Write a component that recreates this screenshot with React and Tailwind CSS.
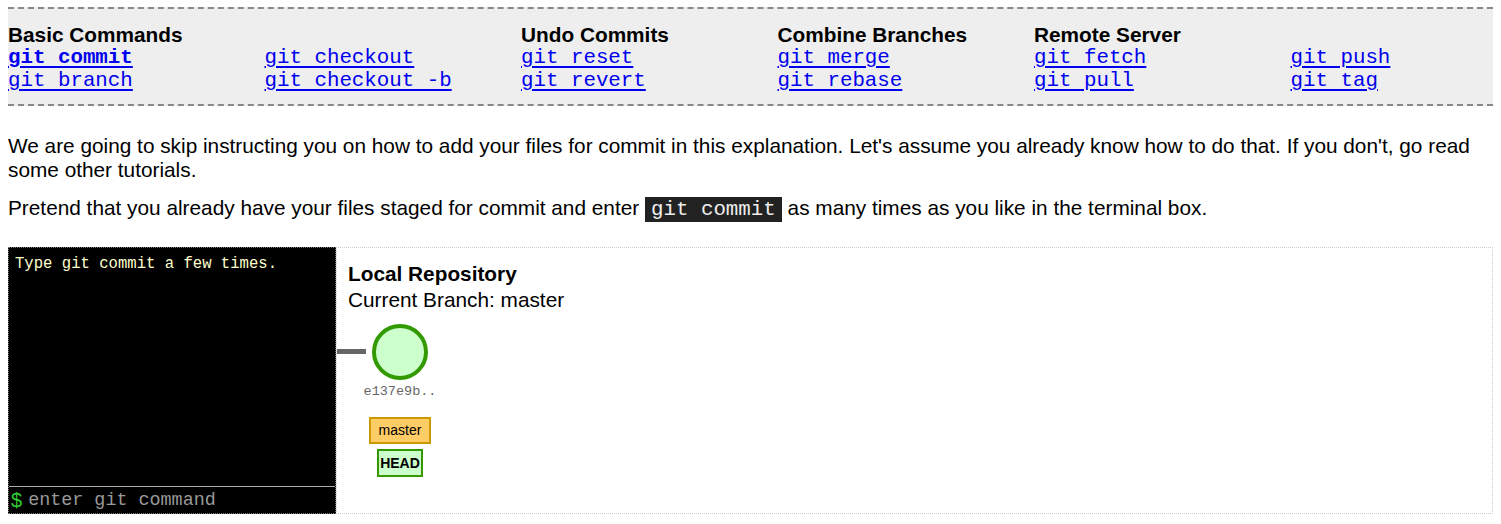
import React from "react";

const columns = [
  { title: "Basic Commands", links: ["git commit", "git branch"], bold: "git commit" },
  { title: "", links: ["git checkout", "git checkout -b"] },
  { title: "Undo Commits", links: ["git reset", "git revert"] },
  { title: "Combine Branches", links: ["git merge", "git rebase"] },
  { title: "Remote Server", links: ["git fetch", "git pull"] },
  { title: "", links: ["git push", "git tag"] },
];

const CommandMenu = () => (
  <div className="flex overflow-hidden border-y-2 border-dashed border-[#888] bg-[#eee] pt-[14px] pb-[12px]">
    {columns.map((col, i) => (
      <div key={i} className="w-[256.5px] shrink-0">
        <div className="h-[23px] text-[20.8px] font-bold leading-[23px]">{col.title}</div>
        {col.links.map((link) => (
          <div key={link} className="leading-[23px]">
            <a
              href="#"
              className={
                "font-['Liberation_Mono','Courier_New',monospace] text-[20.8px] text-[#00e] underline underline-offset-[3px] " +
                (col.bold === link ? "font-bold" : "")
              }
            >
              {link}
            </a>
          </div>
        ))}
      </div>
    ))}
  </div>
);

const Terminal = () => (
  <div className="flex h-full w-[328px] shrink-0 flex-col border border-dotted border-[#777] bg-black">
    <div className="flex-1 px-[6px] pt-[7px] font-['Liberation_Mono','Courier_New',monospace] text-[15.6px] leading-[18px] text-[#ffffcc]">
      Type git commit a few times.
    </div>
    <div className="flex h-[27px] items-center border-t border-[#aaa]">
      <span className="pl-[2px] pr-[6px] text-[20px] leading-none text-[#33cc33]">$</span>
      <input
        type="text"
        placeholder="enter git command"
        className="w-full bg-transparent font-['Liberation_Mono','Courier_New',monospace] text-[18.4px] leading-none text-[#ccc] outline-none placeholder:text-[#999]"
      />
    </div>
  </div>
);

const Repository = () => (
  <div className="relative h-full flex-1 border border-dotted border-[#ccc] pl-[11px] pt-[13px]">
    <div className="text-[20.8px] font-bold leading-[26px]">Local Repository</div>
    <div className="text-[20.8px] leading-[26px]">Current Branch: master</div>

    <svg className="absolute left-0 top-0" width="100" height="140">
      <rect x="-1" y="101" width="30" height="5" fill="#666" />
      <circle cx="63" cy="104" r="26" fill="#ccffcc" stroke="#339900" strokeWidth="4" />
    </svg>
    <div className="absolute left-[23px] top-[135px] w-[80px] text-center font-['Liberation_Mono','Courier_New',monospace] text-[13.5px] leading-[18px] text-[#666]">
      e137e9b..
    </div>
    <div className="absolute left-[32px] top-[169px] flex h-[27px] w-[62px] items-center justify-center border-2 border-[#cc9900] bg-[#ffcc66] text-[14px]">
      master
    </div>
    <div className="absolute left-[40px] top-[201px] flex h-[28px] w-[46px] items-center justify-center border-2 border-[#339900] bg-[#ccffcc] text-[14px] font-bold">
      HEAD
    </div>
  </div>
);

export default function App() {
  return (
    <div className="px-2 pt-[7px] font-['Liberation_Sans',Arial,sans-serif] text-black">
      <CommandMenu />
      <p className="mt-[28px] text-[20.8px] leading-[24px]">
        We are going to skip instructing you on how to add your files for commit in this explanation. Let's assume you
        already know how to do that. If you don't, go read some other tutorials.
      </p>
      <p className="mt-[14px] text-[20.8px] leading-[24px]">
        Pretend that you already have your files staged for commit and enter{" "}
        <code className="bg-[#222] px-[6px] py-[1px] font-['Liberation_Mono','Courier_New',monospace] text-[#eee]">
          git commit
        </code>{" "}
        as many times as you like in the terminal box.
      </p>
      <div className="mt-[25px] flex h-[267px]">
        <Terminal />
        <Repository />
      </div>
    </div>
  );
}
